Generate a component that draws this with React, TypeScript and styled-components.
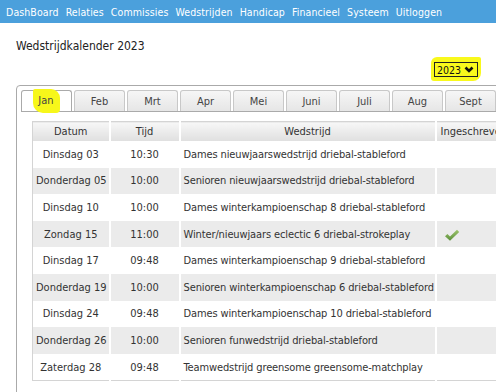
import React from 'react';
import styled, { createGlobalStyle } from 'styled-components';

const GlobalStyle = createGlobalStyle`
  html, body {
    margin: 0;
    padding: 0;
    overflow: hidden;
    background: #fff;
  }
  body {
    font-family: "DejaVu Sans Condensed", "DejaVu Sans", Tahoma, sans-serif;
    font-stretch: condensed;
    color: #333;
  }
`;

const NavBar = styled.div`
  height: 23px;
  background: #4ba0dc;
  display: flex;
  align-items: center;
  gap: 7px;
  padding-left: 6px;
  font-size: 10.5px;
  color: #fff;
  white-space: nowrap;
`;
const NavItem = styled.span`
  letter-spacing: 0.1px;
`;

const Content = styled.div`
  padding-left: 16px;
`;
const Title = styled.div`
  margin-top: 16px;
  font-size: 12px;
  line-height: 14px;
  color: #222;
`;

const SelectRow = styled.div`
  width: 465px;
  display: flex;
  justify-content: flex-end;
  margin-top: 4px;
`;
const Marker = styled.span`
  display: inline-flex;
  background: #f9f91c;
  padding: 5px 3px 4px 3px;
  border-radius: 6px 2px 8px 3px;
`;
const YearSelect = styled.div`
  display: flex;
  align-items: center;
  gap: 3px;
  height: 13px;
  border: 1px solid #222;
  padding: 0 3px 0 2px;
  font-size: 10.5px;
  color: #111;
`;

const TabsPanel = styled.div`
  margin-top: 4px;
  width: 720px;
  border: 1px solid #aaa;
  border-radius: 4px;
  padding: 4px;
  box-sizing: border-box;
  height: 320px;
`;
const TabNav = styled.div`
  display: flex;
  gap: 2px;
  border-bottom: 1px solid #aaa;
`;
const Tab = styled.div<{ $active?: boolean }>`
  width: 49px;
  height: 20px;
  border: 1px solid ${(p) => (p.$active ? '#aaa' : '#c8c8c8')};
  border-bottom: none;
  border-radius: 3px 3px 0 0;
  background: ${(p) =>
    p.$active ? '#fff' : 'linear-gradient(#f6f6f6, #e6e6e6)'};
  display: flex;
  align-items: center;
  justify-content: center;
  font-size: 11px;
  color: #444;
`;
const TabMark = styled.span`
  background: #f7f71a;
  padding: 5px 6px 6px 5px;
  border-radius: 2px 9px 4px 10px;
`;

const PanelBody = styled.div`
  padding: 9px 0 0 11px;
`;

const Table = styled.table`
  width: 493px;
  border-collapse: collapse;
  border: 1px solid #d4d4d4;
  font-size: 11px;
  color: #333;
  table-layout: fixed;
`;
const Col = styled.col<{ $w: number }>`
  width: ${(p) => p.$w}px;
`;
const Th = styled.th<{ $left?: boolean }>`
  height: 19px;
  padding: 0;
  font-weight: normal;
  text-align: ${(p) => (p.$left ? 'left' : 'center')};
  padding-left: ${(p) => (p.$left ? '4px' : '0')};
  background: linear-gradient(#f7f7f7, #dfdfdf);
  border-right: 2px solid #fff;
  white-space: nowrap;
  overflow: hidden;
  color: #333;
`;
const Row = styled.tr<{ $alt: boolean }>`
  background: ${(p) => (p.$alt ? '#ebebeb' : '#fff')};
`;
const Td = styled.td<{ $align?: string; $tight?: boolean }>`
  height: 26.6px;
  padding: 0 3px;
  text-align: ${(p) => p.$align || 'center'};
  letter-spacing: ${(p) => (p.$tight ? '-0.12px' : 'normal')};
  border-right: 2px solid #fff;
  white-space: nowrap;
  overflow: hidden;
`;
const CheckCell = styled.div`
  display: flex;
  padding-left: 4px;
  padding-top: 2px;
`;

const Check = () => (
  <svg width="16" height="13" viewBox="0 0 16 13">
    <defs>
      <linearGradient id="ck" x1="0" y1="0" x2="0" y2="1">
        <stop offset="0" stopColor="#9dc46c" />
        <stop offset="1" stopColor="#5b8f3a" />
      </linearGradient>
    </defs>
    <path d="M1 7.2 L3.4 5 L6 7.4 L13 0.8 L15.2 3 L6 11.8 Z" fill="url(#ck)" />
  </svg>
);

const Chevron = () => (
  <svg width="10" height="8" viewBox="0 0 10 8">
    <polyline points="1.5,1.5 5,5 8.5,1.5" fill="none" stroke="#111" strokeWidth="2.6" />
  </svg>
);

const nav = ['DashBoard', 'Relaties', 'Commissies', 'Wedstrijden', 'Handicap', 'Financieel', 'Systeem', 'Uitloggen'];
const months = ['Jan', 'Feb', 'Mrt', 'Apr', 'Mei', 'Juni', 'Juli', 'Aug', 'Sept', 'Okt', 'Nov', 'Dec'];

const rows = [
  ['Dinsdag 03', '10:30', 'Dames nieuwjaarswedstrijd driebal-stableford', false],
  ['Donderdag 05', '10:00', 'Senioren nieuwjaarswedstrijd driebal-stableford', false],
  ['Dinsdag 10', '10:00', 'Dames winterkampioenschap 8 driebal-stableford', false],
  ['Zondag 15', '11:00', 'Winter/nieuwjaars eclectic 6 driebal-strokeplay', true],
  ['Dinsdag 17', '09:48', 'Dames winterkampioenschap 9 driebal-stableford', false],
  ['Donderdag 19', '10:00', 'Senioren winterkampioenschap 6 driebal-stableford', false],
  ['Dinsdag 24', '09:48', 'Dames winterkampioenschap 10 driebal-stableford', false],
  ['Donderdag 26', '10:00', 'Senioren funwedstrijd driebal-stableford', false],
  ['Zaterdag 28', '09:48', 'Teamwedstrijd greensome greensome-matchplay', false],
] as const;

export default function App() {
  return (
    <>
      <GlobalStyle />
      <NavBar>
        {nav.map((n) => (
          <NavItem key={n}>{n}</NavItem>
        ))}
      </NavBar>
      <Content>
        <Title>Wedstrijdkalender 2023</Title>
        <SelectRow>
          <Marker>
            <YearSelect>
              2023 <Chevron />
            </YearSelect>
          </Marker>
        </SelectRow>
        <TabsPanel>
          <TabNav>
            {months.map((m, i) => (
              <Tab key={m} $active={i === 0}>
                {i === 0 ? <TabMark>{m}</TabMark> : m}
              </Tab>
            ))}
          </TabNav>
          <PanelBody>
            <Table>
              <colgroup>
                <Col $w={77} />
                <Col $w={70} />
                <Col $w={256} />
                <Col $w={90} />
              </colgroup>
              <thead>
                <tr>
                  <Th>Datum</Th>
                  <Th>Tijd</Th>
                  <Th>Wedstrijd</Th>
                  <Th $left>Ingeschreven</Th>
                </tr>
              </thead>
              <tbody>
                {rows.map((r, i) => (
                  <Row key={i} $alt={i % 2 === 1}>
                    <Td>{r[0]}</Td>
                    <Td>{r[1]}</Td>
                    <Td $align="left" $tight>
                      {r[2]}
                    </Td>
                    <Td $align="left">
                      {r[3] ? (
                        <CheckCell>
                          <Check />
                        </CheckCell>
                      ) : null}
                    </Td>
                  </Row>
                ))}
              </tbody>
            </Table>
          </PanelBody>
        </TabsPanel>
      </Content>
    </>
  );
}
